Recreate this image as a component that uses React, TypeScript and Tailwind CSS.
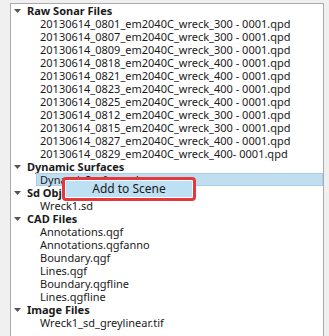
import React from "react";

const font = { fontFamily: '"Noto Sans", "Open Sans", Arial, sans-serif' };

function Header({ label }: { label: string }) {
  return (
    <div className="h-[13px] flex items-center text-[11px] leading-[13px] font-bold text-[#1a1a1a] whitespace-nowrap">
      <svg width="7" height="4" viewBox="0 0 7 4" className="ml-[3px] mr-[6px] shrink-0">
        <path d="M0 0 L7 0 L3.5 4 Z" fill="#555" />
      </svg>
      <span>{label}</span>
    </div>
  );
}

function Child({ label, selected }: { label: string; selected?: boolean }) {
  return (
    <div className="h-[13px] flex items-center text-[11px] leading-[13px] text-[#1a1a1a] whitespace-nowrap">
      {selected ? (
        <div className="ml-[25px] flex-1 h-[13px] bg-[#bfdff0] border border-[#a9d0e6] flex items-center pl-[3px]">
          <span>{label}</span>
        </div>
      ) : (
        <span className="pl-[29px]">{label}</span>
      )}
    </div>
  );
}

const sonar = [
  "20130614_0801_em2040C_wreck_300 - 0001.qpd",
  "20130614_0807_em2040C_wreck_300 - 0001.qpd",
  "20130614_0809_em2040C_wreck_300 - 0001.qpd",
  "20130614_0818_em2040C_wreck_400 - 0001.qpd",
  "20130614_0821_em2040C_wreck_400 - 0001.qpd",
  "20130614_0823_em2040C_wreck_400 - 0001.qpd",
  "20130614_0825_em2040C_wreck_400 - 0001.qpd",
  "20130614_0812_em2040C_wreck_300 - 0001.qpd",
  "20130614_0815_em2040C_wreck_300 - 0001.qpd",
  "20130614_0827_em2040C_wreck_400 - 0001.qpd",
  "20130614_0829_em2040C_wreck_400- 0001.qpd",
];

const cad = [
  "Annotations.qgf",
  "Annotations.qgfanno",
  "Boundary.qgf",
  "Lines.qgf",
  "Boundary.qgfline",
  "Lines.qgfline",
];

export default function App() {
  return (
    <div className="w-[329px] h-[336px] bg-[#f0f0f0] pt-[3px] pl-[10px] pr-[5px] overflow-hidden" style={font}>
      <div className="relative h-full bg-white border-l border-t border-r border-[#ababab] overflow-hidden">
        <div className="flex flex-col">
          <Header label="Raw Sonar Files" />
          {sonar.map((s) => (
            <Child key={s} label={s} />
          ))}
          <Header label="Dynamic Surfaces" />
          <Child label="DynamicSurface.sd" selected />
          <Header label="Sd Objects" />
          <Child label="Wreck1.sd" />
          <Header label="CAD Files" />
          {cad.map((s) => (
            <Child key={s} label={s} />
          ))}
          <Header label="Image Files" />
          <Child label="Wreck1_sd_greylinear.tif" />
        </div>
        <div className="absolute left-[51px] top-[173px] w-[134px] h-[24px] rounded-[4px] border-[3px] border-[#e5383c] bg-white p-[1px]">
          <div className="h-full bg-[#bde0f2] flex items-center justify-center text-[12px] text-[#1a1a1a]">
            Add to Scene
          </div>
        </div>
      </div>
    </div>
  );
}
